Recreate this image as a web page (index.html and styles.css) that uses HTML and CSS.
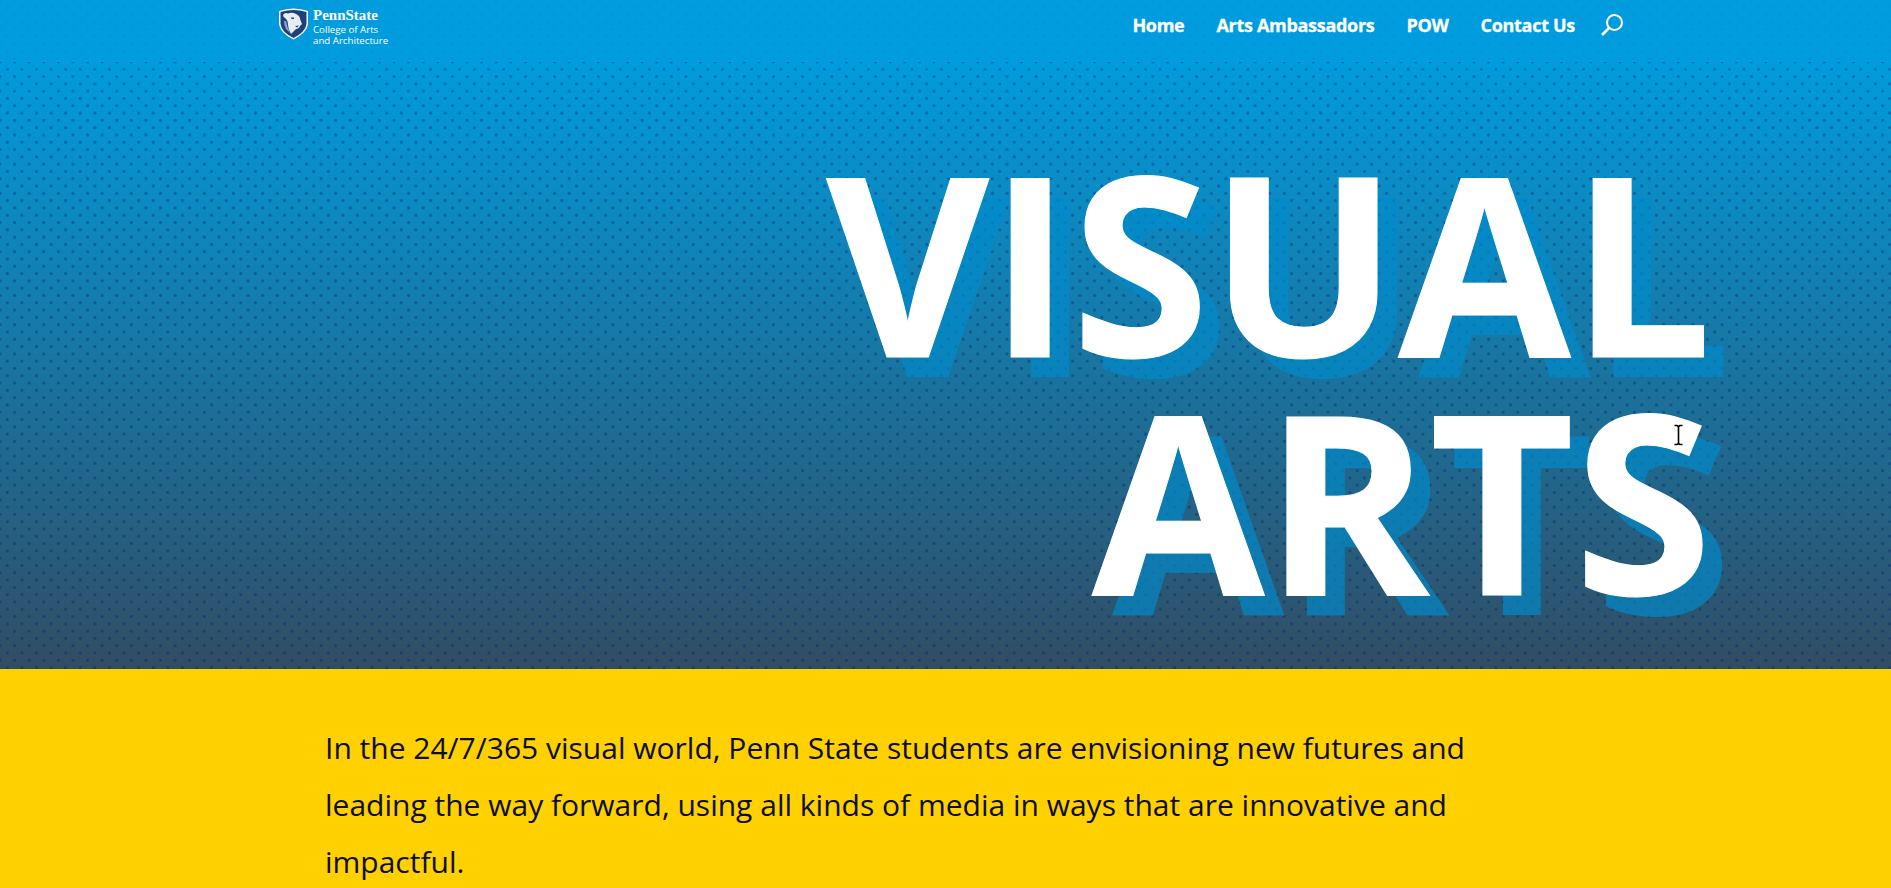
FILE: index.html
```html
<!DOCTYPE html>
<html lang="en">
<head>
    <meta charset="UTF-8">
    <meta name="viewport" content="width=device-width, initial-scale=1.0">
    <title>Visual Arts</title>
    <link rel="stylesheet" href="styles.css">
</head>
<body>

<header class="topo">
    <div class="topo-inner">
        <a class="logo" href="#">
            <svg class="escudo" width="31" height="33" viewBox="0 0 31 33">
                <path d="M1 4 Q15.500 -1 30 4 L30 17 Q29 26 15.500 32.500 Q2 26 1 17 Z" fill="#fff"/>
                <path d="M2.500 5 Q15.500 1 28.500 5 L28.500 17 Q27.500 25 15.500 31 Q3.500 25 2.500 17 Z" fill="#1e407c"/>
                <path d="M5 8 Q7 5 10 6.500 Q14 5 18 7 Q22 9 22 12 L24 17 L22 19 Q21 22 18 22 Q16 24 13 27 Q10 22 10 18 Q10 13 7 11 Q5 10 5 8 Z" fill="#e8edf4"/>
                <path d="M13 10.500 L16 10.500 L16 12 L13.500 12 Z M17 19 L21 18.500 L19 20.500 Z" fill="#1e407c"/>
                <path d="M8 14 Q9 20 12 26 L8 22 Q6 18 6 14 Z" fill="#8fa3c4"/>
            </svg>
            <span class="logo-texto">
                <span class="logo-nome">PennState</span>
                <span class="logo-sub">College of Arts</span>
                <span class="logo-sub">and Architecture</span>
            </span>
        </a>
        <nav class="menu">
            <a href="#">Home</a>
            <a href="#">Arts Ambassadors</a>
            <a href="#">POW</a>
            <a href="#">Contact Us</a>
            <svg class="busca" width="24" height="24" viewBox="0 0 24 24">
                <circle cx="14.500" cy="9.500" r="7.500" fill="none" stroke="#fff" stroke-width="2"/>
                <path d="M9 15 L2 22" fill="none" stroke="#fff" stroke-width="2.600"/>
            </svg>
        </nav>
    </div>
</header>

<section class="hero">
    <h1 class="titulo">VISUAL<br>ARTS</h1>
    <svg class="cursor" width="11" height="22" viewBox="0 0 11 22">
        <path d="M1.500 1.500 H4 L5.500 2.500 L7 1.500 H9.500 M5.500 2.500 V19.500 M1.500 20.500 H4 L5.500 19.500 L7 20.500 H9.500" fill="none" stroke="#fff" stroke-width="3"/>
        <path d="M1.500 1.500 H4 L5.500 2.500 L7 1.500 H9.500 M5.500 2.500 V19.500 M1.500 20.500 H4 L5.500 19.500 L7 20.500 H9.500" fill="none" stroke="#000" stroke-width="1.600"/>
    </svg>
</section>

<section class="intro">
    <p>In the 24/7/365 visual world, Penn State students are envisioning new futures and leading the way forward, using all kinds of media in ways that are innovative and impactful.</p>
</section>

</body>
</html>
```

FILE: styles.css
```css
html, body {
    margin: 0;
    height: 100%;
    overflow: hidden;
}
body {
    font-family: "Open Sans", sans-serif;
    background-color: #ffd100;
}
.topo {
    height: 62px;
    background-color: #009cde;
    background-image:
        radial-gradient(circle, rgba(0, 70, 150, 0.06) 1px, transparent 2px),
        radial-gradient(circle, rgba(0, 70, 150, 0.06) 1px, transparent 2px);
    background-size: 14.600px 14.600px;
    background-position: 0 0, 7.300px 7.300px;
}
.topo-inner {
    width: 1346px;
    margin-left: 278px;
    display: flex;
    justify-content: space-between;
}
.logo {
    display: flex;
    gap: 4px;
    padding-top: 7px;
    color: #fff;
    text-decoration: none;
}
.logo-texto {
    display: flex;
    flex-direction: column;
    padding-top: 1px;
}
.logo-nome {
    font-family: "Liberation Serif", serif;
    font-weight: bold;
    font-size: 15px;
    line-height: 15px;
    margin-bottom: 1px;
}
.logo-sub {
    font-size: 9.700px;
    line-height: 11px;
}
.menu {
    display: flex;
    align-items: center;
    gap: 32px;
    height: 50px;
}
.menu a {
    color: #fff;
    text-decoration: none;
    font-weight: 700;
    font-size: 18px;
    letter-spacing: -0.300px;
    -webkit-text-stroke: 0.300px #fff;
}
.busca {
    margin-left: -7px;
}
.hero {
    position: relative;
    height: 607px;
    box-sizing: border-box;
    padding-top: 79px;
    padding-right: 179px;
    background-image:
        radial-gradient(circle, rgba(0, 30, 110, 0.38) 1px, transparent 2px),
        radial-gradient(circle, rgba(0, 30, 110, 0.38) 1px, transparent 2px),
        linear-gradient(#009cde, #314d64);
    background-size: 14.600px 14.600px, 14.600px 14.600px, auto;
    background-position: 0 0, 7.300px 7.300px, 0 0;
}
.titulo {
    margin: 0;
    text-align: right;
    color: #fff;
    font-size: 250px;
    line-height: 238px;
    font-weight: 700;
    -webkit-text-stroke: 1px #fff;
    text-shadow: 20px 20px 0 rgba(0, 140, 205, 0.65);
}
.cursor {
    position: absolute;
    left: 1673px;
    top: 362px;
}
.intro {
    padding: 50px 0 0 325px;
}
.intro p {
    margin: 0;
    width: 1170px;
    font-size: 30px;
    line-height: 57px;
    color: #0d0d26;
}
```
